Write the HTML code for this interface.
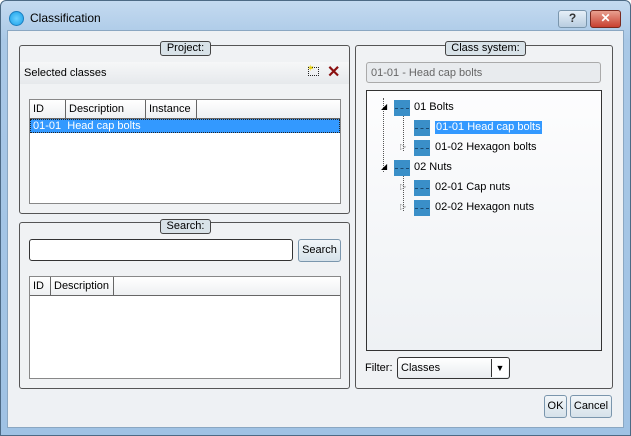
<!DOCTYPE html>
<html><head><style>
*{box-sizing:border-box;margin:0;padding:0}
body{width:631px;height:436px;overflow:hidden;background:#fff;font-family:"Liberation Sans",sans-serif;font-size:11px;color:#000;position:relative}
.a{position:absolute}
.win{left:0;top:0;width:631px;height:436px;background:linear-gradient(#c4daf0,#a9c8e6 40px,#9fc2e4);border:1px solid #4d6a85;border-radius:6px 6px 0 0}
.client{left:7px;top:30px;width:617px;height:398px;background:#eef1f4;border:1px solid #8aa7c2}
.grp{border:1px solid #555;border-radius:3px;background:#f0f2f4}
.lbl{background:#d8e2e8;border:1px solid #444;border-radius:3px;text-align:center;font-size:11px;line-height:13px;height:15px}
.tbl{background:#fff;border:1px solid #888}
.hd{position:absolute;top:0;height:19px;border-right:1px solid #666;border-bottom:1px solid #666;background:linear-gradient(#fff,#eef0f2);padding:3px 0 0 3px;font-size:11px}
.btn{border:1px solid #7a96ad;border-radius:3px;background:linear-gradient(#f2f6f9,#d6e2ea);text-align:center;font-size:11px}
.ti{position:absolute;font-size:11px;line-height:13px}
.ic{position:absolute;width:16px;height:16px;background:#3a8fc8}
.ic:after{content:"";position:absolute;left:1px;right:1px;top:8px;border-top:1px dashed #1c4a70}
</style></head><body>
<div class="a win"></div>
<div class="a" style="left:9px;top:11px;width:15px;height:15px;border-radius:50%;background:radial-gradient(#6ad0ff,#1aa0e8);border:1px solid #1b7fc0"></div>
<div class="a" style="left:30px;top:11px;font-size:12px">Classification</div>
<div class="a btn" style="left:558px;top:10px;width:29px;height:18px;background:linear-gradient(#e6eff8,#b8cde0);font-weight:bold;font-size:12px;color:#333">?</div>
<div class="a" style="left:590px;top:10px;width:31px;height:18px;border:1px solid #7a2a20;border-radius:3px;background:linear-gradient(#e8a090,#c84030);color:#fff;font-weight:bold;text-align:center;font-size:12px">✕</div>
<div class="a client"></div>

<div class="a grp" style="left:19px;top:45px;width:331px;height:169px"></div>
<div class="a lbl" style="left:160px;top:41px;width:51px">Project:</div>
<div class="a" style="left:20px;top:62px;width:329px;height:22px;background:linear-gradient(#f6f7f8,#e6e9ec)"></div>
<div class="a" style="left:24px;top:67px">Selected classes</div>
<div class="a" style="left:308px;top:67px;width:11px;height:9px;border:1px dotted #222"></div>
<div class="a" style="left:307px;top:63px;color:#e8d000;font-size:9px">✶</div>
<div class="a" style="left:327px;top:62px;color:#8b1010;font-size:16px;font-weight:bold">✕</div>
<div class="a tbl" style="left:29px;top:99px;width:312px;height:105px">
<div class="hd" style="left:0;width:36px">ID</div>
<div class="hd" style="left:36px;width:80px">Description</div>
<div class="hd" style="left:116px;width:51px">Instance</div>
<div class="hd" style="left:167px;width:143px;border-right:0"></div>
<div class="a" style="left:0;top:19px;width:310px;height:14px;background:#3399ff;color:#fff;border:1px dotted #222;padding-left:2px;line-height:12px">01-01&nbsp; Head cap bolts</div>
</div>

<div class="a grp" style="left:19px;top:222px;width:331px;height:167px"></div>
<div class="a lbl" style="left:160px;top:219px;width:51px">Search:</div>
<div class="a" style="left:29px;top:239px;width:264px;height:22px;background:#fff;border:1px solid #333;border-radius:3px"></div>
<div class="a btn" style="left:298px;top:239px;width:43px;height:23px;line-height:21px">Search</div>
<div class="a tbl" style="left:29px;top:276px;width:312px;height:103px">
<div class="hd" style="left:0;width:21px">ID</div>
<div class="hd" style="left:21px;width:63px">Description</div>
<div class="hd" style="left:84px;width:226px;border-right:0"></div>
</div>

<div class="a grp" style="left:355px;top:45px;width:258px;height:344px"></div>
<div class="a lbl" style="left:445px;top:41px;width:81px">Class system:</div>
<div class="a" style="left:366px;top:62px;width:235px;height:21px;border:1px solid #aaa;border-radius:3px;background:#e8ebee;color:#666;padding:4px 4px">01-01 - Head cap bolts</div>
<div class="a" style="left:366px;top:90px;width:236px;height:261px;border:1px solid #333;background:linear-gradient(#fdfdfe,#eef1f4)"></div>
<div class="a" style="left:383px;top:98px;height:74px;border-left:1px dotted #555"></div>
<div class="a" style="left:403px;top:115px;height:36px;border-left:1px dotted #555"></div>
<div class="a" style="left:403px;top:175px;height:36px;border-left:1px dotted #555"></div>
<div class="a" style="left:381px;top:102px;font-size:8px">◢</div>
<div class="ic" style="left:394px;top:100px"></div><div class="ti" style="left:414px;top:101px">01 Bolts</div>
<div class="ic" style="left:414px;top:120px"></div><div class="ti" style="left:435px;top:121px;background:#3399ff;color:#fff;padding:0 1px">01-01 Head cap bolts</div>
<div class="a" style="left:400px;top:142px;font-size:8px;color:#888">▷</div>
<div class="ic" style="left:414px;top:140px"></div><div class="ti" style="left:435px;top:141px">01-02 Hexagon bolts</div>
<div class="a" style="left:381px;top:162px;font-size:8px">◢</div>
<div class="ic" style="left:394px;top:160px"></div><div class="ti" style="left:414px;top:161px">02 Nuts</div>
<div class="a" style="left:400px;top:182px;font-size:8px;color:#888">▷</div>
<div class="ic" style="left:414px;top:180px"></div><div class="ti" style="left:435px;top:181px">02-01 Cap nuts</div>
<div class="a" style="left:400px;top:202px;font-size:8px;color:#888">▷</div>
<div class="ic" style="left:414px;top:200px"></div><div class="ti" style="left:435px;top:201px">02-02 Hexagon nuts</div>

<div class="a" style="left:365px;top:362px">Filter:</div>
<div class="a" style="left:397px;top:357px;width:113px;height:22px;border:1px solid #333;border-radius:3px;background:linear-gradient(#fff,#e8ecef);padding:4px 3px">Classes</div>
<div class="a" style="left:491px;top:359px;width:17px;height:18px;border-left:1px solid #333;background:#fff;text-align:center;font-size:9px;line-height:18px">▼</div>

<div class="a btn" style="left:544px;top:395px;width:23px;height:23px;line-height:21px">OK</div>
<div class="a btn" style="left:570px;top:395px;width:42px;height:23px;line-height:21px">Cancel</div>
</body></html>
